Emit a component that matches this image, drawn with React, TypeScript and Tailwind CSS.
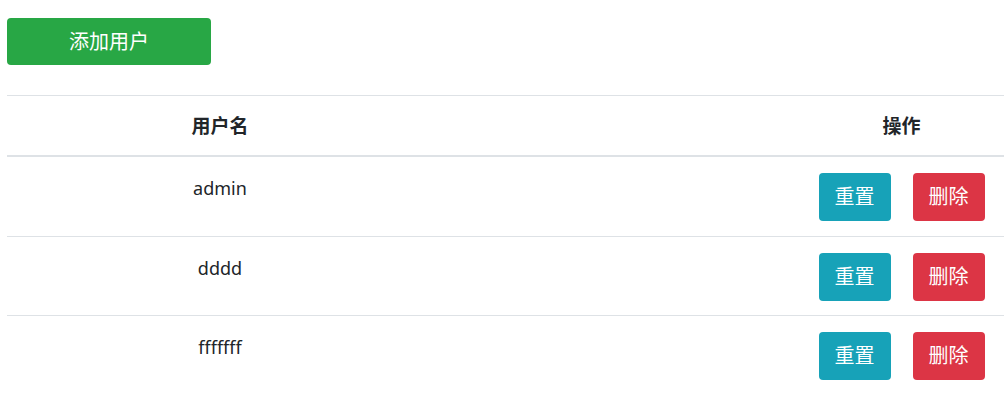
const users = ["admin", "dddd", "fffffff"];

const font = "font-['Noto_Sans','Noto_Sans_CJK_SC',sans-serif]";

export default function App() {
  return (
    <div className={`min-h-[405px] bg-white pl-[7px] pt-[18px] text-[#212529] ${font}`}>
      {/* Toolbar */}
      <button className="h-[47px] w-[204px] rounded-[4px] bg-[#28a745] text-[20px] text-white">
        添加用户
      </button>

      {/* User table */}
      <div className="mt-[30px] w-[997px] border-t border-[#dee2e6]">
        <div className="grid h-[61px] grid-cols-[426px_1fr_205px] items-center border-b-2 border-[#dee2e6] pt-px text-center text-[19px] font-bold">
          <div>用户名</div>
          <div />
          <div>操作</div>
        </div>

        {users.map((name, i) => (
          <div
            key={name}
            className={`grid h-[79px] grid-cols-[426px_1fr_205px] text-center text-[18px] ${
              i > 0 ? "border-t border-[#dee2e6]" : ""
            }`}
          >
            <div className="pt-[18px] leading-[27px]">{name}</div>
            <div />
            <div className="flex justify-center gap-[22px] pt-[16px]">
              <button className="h-[48px] w-[72px] rounded-[4px] bg-[#17a2b8] text-[20px] text-white">
                重置
              </button>
              <button className="h-[48px] w-[72px] rounded-[4px] bg-[#dc3545] text-[20px] text-white">
                删除
              </button>
            </div>
          </div>
        ))}
      </div>
    </div>
  );
}
